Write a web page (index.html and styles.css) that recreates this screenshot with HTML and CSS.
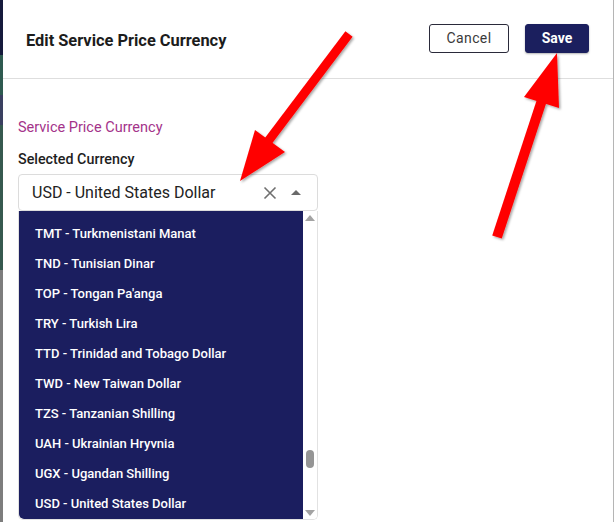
FILE: index.html
```html
<!DOCTYPE html>
<html>
<head>
<meta charset="utf-8">
<link rel="stylesheet" href="styles.css">
</head>
<body>
<div class="page">
  <div class="backdrop">
    <div class="seg s1"></div>
    <div class="seg s2"></div>
    <div class="seg s3"></div>
    <div class="seg s4"></div>
    <div class="seg s5"></div>
  </div>
  <div class="modal">
    <div class="header">
      <h1 class="title">Edit Service Price Currency</h1>
      <div class="actions">
        <button class="btn btn-cancel">Cancel</button>
        <button class="btn btn-save">Save</button>
      </div>
    </div>
    <div class="body">
      <div class="section-label">Service Price Currency</div>
      <div class="field-label">Selected Currency</div>
      <div class="select">
        <span class="select-value">USD - United States Dollar</span>
        <svg class="clear-icon" width="14" height="14" viewBox="0 0 14 14"><path d="M1.5 1.5L12.5 12.5M12.5 1.5L1.5 12.5" stroke="#6f6f6f" stroke-width="1.6" fill="none"/></svg>
        <svg class="caret-icon" width="10" height="6" viewBox="0 0 10 6"><path d="M0 6L5 1L10 6Z" fill="#6a6a6a"/></svg>
      </div>
      <div class="dropdown">
        <ul class="options">
          <li>TMT - Turkmenistani Manat</li>
          <li>TND - Tunisian Dinar</li>
          <li>TOP - Tongan Pa'anga</li>
          <li>TRY - Turkish Lira</li>
          <li>TTD - Trinidad and Tobago Dollar</li>
          <li>TWD - New Taiwan Dollar</li>
          <li>TZS - Tanzanian Shilling</li>
          <li>UAH - Ukrainian Hryvnia</li>
          <li>UGX - Ugandan Shilling</li>
          <li>USD - United States Dollar</li>
        </ul>
        <div class="scrollbar">
          <svg class="sb-arrow" width="10" height="8" viewBox="0 0 10 8"><path d="M0 7L5 1L10 7Z" fill="#a3a3a3"/></svg>
          <div class="sb-track"><div class="sb-thumb"></div></div>
          <svg class="sb-arrow" width="10" height="8" viewBox="0 0 10 8"><path d="M0 1L5 7L10 1Z" fill="#a3a3a3"/></svg>
        </div>
      </div>
    </div>
  </div>
  <svg class="arrows" width="615" height="522" viewBox="0 0 615 522">
    <defs>
      <filter id="sh" x="-20%" y="-20%" width="140%" height="140%">
        <feDropShadow dx="1.5" dy="1.5" stdDeviation="1.2" flood-color="#000" flood-opacity="0.35"/>
      </filter>
    </defs>
    <g filter="url(#sh)" fill="#ff0000">
      <line x1="349" y1="34" x2="266" y2="144" stroke="#ff0000" stroke-width="9"/>
      <polygon points="255,130 285,152 240,181"/>
      <line x1="497" y1="237" x2="542" y2="100" stroke="#ff0000" stroke-width="10"/>
      <polygon points="524,97 559,108 557,53"/>
    </g>
  </svg>
</div>
</body>
</html>
```

FILE: styles.css
```css
* { box-sizing: border-box; }
html, body { margin: 0; padding: 0; }
body {
  font-family: Roboto, "Noto Sans", "Liberation Sans", sans-serif;
  background: #ffffff;
  width: 615px;
  height: 522px;
  overflow: hidden;
}
.page {
  position: relative;
  display: flex;
  width: 615px;
  height: 522px;
}
.backdrop {
  width: 3px;
  display: flex;
  flex-direction: column;
  flex-shrink: 0;
}
.seg { width: 3px; }
.s1 { height: 55px; background: #151a3c; }
.s2 { height: 40px; background: #2e5a50; }
.s3 { height: 30px; background: #3a4060; }
.s4 { height: 145px; background: #36594f; }
.s5 { flex: 1; background: #7d7d7d; }
.modal {
  width: 611px;
  height: 522px;
  background: #ffffff;
  border-right: 1px solid #b5b5b5;
  display: flex;
  flex-direction: column;
}
.header {
  height: 79px;
  border-bottom: 1px solid #dedede;
  display: flex;
  align-items: center;
  justify-content: space-between;
  padding: 0 24px 0 23px;
}
.title {
  margin: 3px 0 0 0;
  font-size: 16.4px;
  font-weight: 700;
  color: #1c1c1c;
  letter-spacing: 0px;
}
.actions {
  display: flex;
  gap: 16px;
  margin-top: -2px;
}
.btn {
  font-family: Roboto, "Noto Sans", "Liberation Sans", sans-serif;
  font-size: 14px;
  height: 29px;
  border-radius: 3px;
  cursor: pointer;
}
.btn-cancel {
  width: 80px;
  background: #ffffff;
  border: 1px solid #2a2a3a;
  color: #3a3a3a;
  font-weight: 400;
  letter-spacing: 0.4px;
}
.btn-save {
  width: 64px;
  background: #1b1f5e;
  border: 1px solid #1b1f5e;
  color: #ffffff;
  font-weight: 700;
  box-shadow: 0 1px 2px rgba(0,0,0,0.3);
}
.body {
  padding: 41px 0 0 15px;
  display: flex;
  flex-direction: column;
}
.section-label {
  font-size: 14.5px;
  color: #a4338a;
  line-height: 16px;
}
.field-label {
  margin-top: 15px;
  font-size: 14.3px;
  font-weight: 500;
  color: #1e1e1e;
  line-height: 16px;
}
.select {
  margin-top: 7px;
  width: 300px;
  height: 37px;
  border: 1px solid #dcdcdc;
  border-radius: 4px;
  display: flex;
  align-items: center;
  padding: 0 16px 0 13px;
}
.select-value {
  flex: 1;
  font-size: 16px;
  color: #222222;
}
.clear-icon { margin-right: 14px; }
.caret-icon { margin-top: -2px; }
.dropdown {
  width: 300px;
  height: 309px;
  display: flex;
  border: 1px solid #e2e2e2;
  border-top: none;
  border-radius: 0 0 5px 5px;
  overflow: hidden;
}
.options {
  list-style: none;
  margin: 0;
  padding: 8px 0 0 0;
  width: 285px;
  background: #1b1e5f;
  border-radius: 0 0 0 5px;
}
.options li {
  height: 30px;
  line-height: 30px;
  padding-left: 16px;
  font-size: 13px;
  font-weight: 500;
  color: #ffffff;
}
.scrollbar {
  width: 14px;
  display: flex;
  flex-direction: column;
  align-items: center;
  background: #ffffff;
  padding: 3px 0 2px;
}
.sb-track {
  flex: 1;
  width: 100%;
  display: flex;
  justify-content: center;
  align-items: flex-end;
  padding-bottom: 41px;
}
.sb-thumb {
  width: 8px;
  height: 18px;
  border-radius: 4px;
  background: #959595;
}
.arrows {
  position: absolute;
  left: 0;
  top: 0;
  pointer-events: none;
}
```
